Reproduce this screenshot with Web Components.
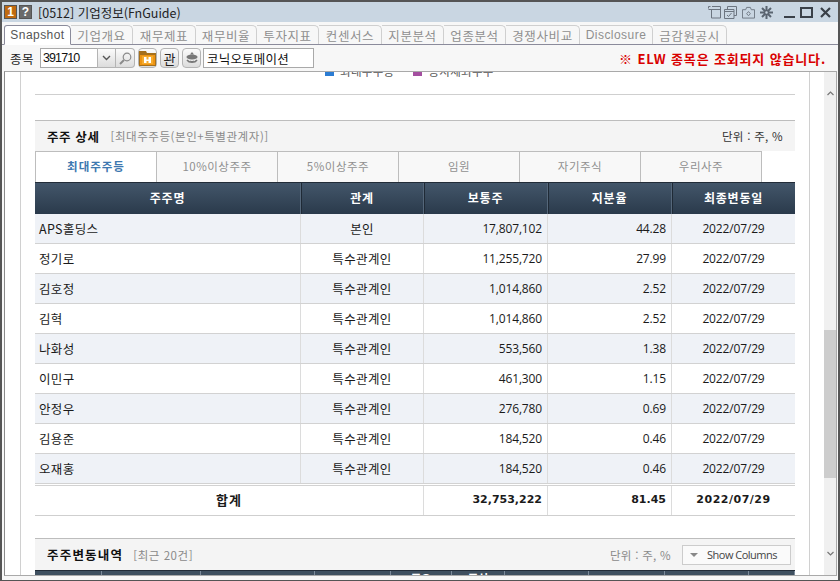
<!DOCTYPE html>
<html lang="ko">
<head>
<meta charset="utf-8">
<title>기업정보</title>
<style>
  html, body { margin: 0; padding: 0; background: #f4f4f4; }
  body { font-family: "Noto Sans CJK KR", "Open Sans", sans-serif; font-size: 12px; }
</style>
</head>
<body>
<fn-window></fn-window>

<script>
const KR = `"Noto Sans CJK KR", sans-serif`;
const NUM = `"Open Sans", "Noto Sans CJK KR", sans-serif`;

class FnTitleBar extends HTMLElement {
  constructor() {
    super();
    this.attachShadow({ mode: "open" }).innerHTML = `
      <style>
        :host { display: flex; align-items: center; height: 20px; background: #c9d6e2; padding: 0 0 0 2px; color: #222; }
        .badge { width: 11px; height: 12px; display: flex; align-items: center; justify-content: center; font: bold 12px "Liberation Sans", sans-serif; color: #fff; margin-right: 2px; border: 1px solid #555; }
        .one { background: #c06a10; }
        .help { background: #6a6a6a; }
        .title { margin-left: 4px; font: 12.500px ${KR}; white-space: nowrap; flex: 1; }
        svg { display: block; fill: none; stroke: #6c7580; stroke-width: 1; }
        .tools { display: flex; align-items: center; }
        .win { display: flex; align-items: center; margin-left: 11px; margin-right: 7px; }
        .win svg { stroke: #3a4048; stroke-width: 2; }
      </style>
      <span class="badge one">1</span><span class="badge help">?</span>
      <span class="title">[0512] 기업정보(FnGuide)</span>
      <span class="tools">
        <svg style="margin-right:3px" width="13" height="13" viewBox="0 0 13 13"><path d="M.5 .5h2M.5 .5v2M4 .5h8.500v11.500h-9v-8M.5 3.500h12"/></svg>
        <svg style="margin-right:5px" width="13" height="13" viewBox="0 0 13 13"><path d="M3.500 3V.5h9v9H10M.5 3.500h9.500v9H.5zM.5 5.500h9.500M3 9l1.500 1.500L7.500 7"/></svg>
        <svg style="margin-right:5px" width="13" height="13" viewBox="0 0 14 13"><path d="M.5 3.500h3.500l1-2.500h4l1 2.500h3.500v9H.5zM7 5.500L9 7.800 7 10 5 7.800z"/></svg>
        <svg width="13" height="13" viewBox="0 0 13 13" style="stroke:#5a6470;stroke-width:2"><path d="M6.500 0v13M0 6.500h13M2 2l9 9M11 2l-9 9"/><circle cx="6.500" cy="6.500" r="2" fill="#c9d6e2" stroke-width="1.500"/></svg>
      </span>
      <span class="win">
        <svg style="margin-right:5px" width="11" height="13" viewBox="0 0 11 13"><path d="M0 11h11"/></svg>
        <svg style="margin-right:7px" width="13" height="11" viewBox="0 0 13 11"><path d="M1 1h11v9H1z"/></svg>
        <svg width="11" height="11" viewBox="0 0 11 11" style="stroke-width:2.200"><path d="M1 1l9 9M10 1l-9 9"/></svg>
      </span>`;
  }
}

class FnTabStrip extends HTMLElement {
  constructor() {
    super();
    const tabs = [["Snapshot", 67], ["기업개요", 62], ["재무제표", 63], ["재무비율", 61], ["투자지표", 62], ["컨센서스", 63], ["지분분석", 62], ["업종분석", 62], ["경쟁사비교", 74], ["Disclosure", 73], ["금감원공시", 74]];
    this.attachShadow({ mode: "open" }).innerHTML = `
      <style>
        :host { display: flex; align-items: flex-end; height: 22px; padding-left: 2px; border-bottom: 1px solid #8b8b9b; background: #f7f7f7; box-sizing: content-box; }
        .tab { box-sizing: border-box; height: 19px; border: 1px solid #cfcfcf; border-bottom: 0; border-left: 0; border-top-right-radius: 5px; color: #8f8f8f; font: 12.500px/19px ${KR}; letter-spacing: .6px; text-align: center; white-space: nowrap; }
        .tab.on { background: #fff; color: #555; border: 1px solid #8b8b9b; border-bottom: 1px solid #fff; margin-bottom: -1px; height: 20px; border-top-left-radius: 3px; border-top-right-radius: 5px; }
        .latin { font-family: "Liberation Sans", sans-serif; font-size: 12px; letter-spacing: .45px; }
      </style>
      ${tabs.map(([t, w], i) => `<div class="tab ${i === 0 ? "on" : ""} ${/^[A-Z]/.test(t) ? "latin" : ""}" style="width:${w}px">${t}</div>`).join("")}`;
  }
}

class FnToolBar extends HTMLElement {
  constructor() {
    super();
    this.attachShadow({ mode: "open" }).innerHTML = `
      <style>
        :host { display: flex; align-items: center; height: 26px; padding: 0 12px 0 8px; background: #f7f7f7; color: #222; }
        .label { width: 30px; font: 12.500px ${KR}; letter-spacing: .5px; }
        .field { box-sizing: border-box; height: 20px; border: 1px solid #a9a9a9; background: #fff; font: 12.500px ${KR}; color: #111; display: flex; align-items: center; padding-left: 3px; }
        .code { width: 57px; padding-left: 2px; font-family: "Liberation Sans", sans-serif; font-size: 12.500px; letter-spacing: -.9px; border-right: 0; }
        .seg { box-sizing: border-box; width: 19px; height: 20px; border: 1px solid #b4b4b4; background: linear-gradient(#fbfbfb, #dcdcdc); display: flex; align-items: center; justify-content: center; }
        .seg.btn { border-radius: 4px; margin-left: 3px; font: 13px ${KR}; color: #222; }
        .seg + .seg:not(.btn) { border-left: 0; border-radius: 0 4px 4px 0; }
        .name { width: 111px; margin-left: 2px; padding-left: 3px; letter-spacing: .2px; }
        .msg { margin-left: auto; color: #d90000; font: bold 13px ${KR}; letter-spacing: .85px; white-space: nowrap; }
        svg { display: block; }
      </style>
      <span class="label">종목</span>
      <span class="field code">391710</span>
      <span class="seg"><svg width="9" height="6" viewBox="0 0 9 6"><path d="M1 1l3.500 3.500L8 1" fill="none" stroke="#555" stroke-width="1.400"/></svg></span>
      <span class="seg"><svg width="13" height="13" viewBox="0 0 13 13" fill="none" stroke="#8a8a8a"><circle cx="8" cy="5" r="3.800" stroke-width="1.200"/><path d="M5 8l-4 4" stroke-width="2"/></svg></span>
      <span class="seg btn"><svg width="17" height="15" viewBox="0 0 17 15"><path d="M0 0h7l1 2h9v13H0z" fill="#a5701c"/><path d="M1 4h15v10H1z" fill="#ee9412"/><path d="M3 5h11v8H3z" fill="#f5ab2e"/><path d="M5 6h2.500v2.500h2V6H12v6H9.500V10h-2v2H5z" fill="#fff"/></svg></span>
      <span class="seg btn">관</span>
      <span class="seg btn"><svg width="14" height="14" viewBox="0 0 14 14"><path d="M5 3.500L7 1l2 2.500z" fill="#777"/><ellipse cx="7" cy="6" rx="5.500" ry="2.500" fill="#777"/><path d="M2 9c2 3 8 3 10 0" fill="none" stroke="#777" stroke-width="1.500"/><path d="M5 10c1 .8 3 .8 4 0" fill="none" stroke="#777" stroke-width="1"/></svg></span>
      <span class="field name">코닉오토메이션</span>
      <span class="msg">※ ELW 종목은 조회되지 않습니다.</span>`;
  }
}

class FnSectionHead extends HTMLElement {
  constructor() {
    super();
    this.attachShadow({ mode: "open" }).innerHTML = `
      <style>
        :host { display: flex; align-items: center; box-sizing: border-box; height: 31px; border-top: 1px solid #bdbdbd; background: #f4f4f4; padding: 0 12px; }
        .title { font: bold 12.500px ${KR}; color: #111; letter-spacing: var(--title-gap, .6px); }
        .sub { margin-left: var(--sub-gap, 11px); color: #8a8a8a; font: 11.500px ${KR}; letter-spacing: .55px; }
        .unit { margin-left: auto; color: var(--unit-color, #333); font: 11.500px ${KR}; letter-spacing: .3px; }
      </style>
      <span class="title"><slot name="title"></slot></span>
      <span class="sub"><slot name="sub"></slot></span>
      <span class="unit"><slot name="unit"></slot></span>
      <slot name="extra"></slot>`;
  }
}

class FnShowColumns extends HTMLElement {
  constructor() {
    super();
    this.attachShadow({ mode: "open" }).innerHTML = `
      <style>
        :host { display: flex; align-items: center; box-sizing: border-box; width: 109px; height: 20px; margin-left: 11px; margin-right: -8px; border: 1px solid #ccc; background: #fafafa; color: #444; font: 11px "Open Sans", sans-serif; letter-spacing: -.5px; white-space: nowrap; }
        i { flex: none; width: 0; height: 0; border: 4px solid transparent; border-top: 4px solid #888; border-bottom: 0; margin: 0 9px 0 7px; }
      </style>
      <i></i><span>Show Columns</span>`;
  }
}

class FnHolderTabs extends HTMLElement {
  constructor() {
    super();
    const tabs = ["최대주주등", "10%이상주주", "5%이상주주", "임원", "자기주식", "우리사주"];
    this.attachShadow({ mode: "open" }).innerHTML = `
      <style>
        :host { display: flex; height: 31px; background: #fff; }
        .t { box-sizing: border-box; width: 121px; height: 31px; border: 1px solid #bdbdbd; border-left: 0; border-bottom: 0; background: #f8f8f8; color: #909090; font: 11.500px/28px ${KR}; letter-spacing: .5px; text-align: center; }
        .t.on { border-left: 1px solid #bdbdbd; background: #fff; color: #3d78b0; font-weight: bold; width: 122px; letter-spacing: 1px; }
      </style>
      ${tabs.map((t, i) => `<div class="t ${i === 0 ? "on" : ""}">${t}</div>`).join("")}`;
  }
}

class FnHolderTable extends HTMLElement {
  constructor() {
    super();
    const rows = [
      ["APS홀딩스", "본인", "17,807,102", "44.28"],
      ["정기로", "특수관계인", "11,255,720", "27.99"],
      ["김호정", "특수관계인", "1,014,860", "2.52"],
      ["김혁", "특수관계인", "1,014,860", "2.52"],
      ["나화성", "특수관계인", "553,560", "1.38"],
      ["이민구", "특수관계인", "461,300", "1.15"],
      ["안정우", "특수관계인", "276,780", "0.69"],
      ["김용준", "특수관계인", "184,520", "0.46"],
      ["오재홍", "특수관계인", "184,520", "0.46"],
    ];
    const row = (r, i) => `
      <div class="row ${i % 2 ? "" : "alt"}">
        <div class="c l">${r[0]}</div><div class="c m">${r[1]}</div>
        <div class="c r n">${r[2]}</div><div class="c r n">${r[3]}</div><div class="c m n">2022/07/29</div>
      </div>`;
    this.attachShadow({ mode: "open" }).innerHTML = `
      <style>
        :host { display: block; --cols: 265px 123px 124px 124px 124px; }
        .head, .row, .total { display: grid; grid-template-columns: var(--cols); }
        .head { height: 32px; background: linear-gradient(#43566a, #2a3a4b); border-top: 1px solid #222c38; box-sizing: border-box; }
        .head div { color: #fff; font: bold 12px/29px ${KR}; letter-spacing: .8px; text-align: center; border-left: 1px solid #55677a; box-shadow: inset 1px 0 0 #1f2a36; }
        .head div:first-child { border-left: 0; box-shadow: none; }
        .row { height: 30px; box-sizing: border-box; border-bottom: 1px solid #d2d2d2; background: #fff; }
        .row.alt { background: #eff2f7; }
        .c { border-left: 1px solid #dcdcdc; font: 12.500px/29px ${KR}; letter-spacing: .35px; color: #1a1a1a; white-space: nowrap; }
        .c:first-child { border-left: 0; }
        .l { padding-left: 4px; }
        .m { text-align: center; }
        .r { text-align: right; padding-right: 5px; }
        .n { font-family: ${NUM}; font-size: 12px; letter-spacing: -.15px; }
        .total { height: 31px; box-sizing: border-box; border-top: 1px solid #d2d2d2; border-bottom: 1px solid #cfcfcf; margin-top: 1px; background: #fff; }
        .total .c { font-weight: bold; line-height: 28px; }
        .total .n { font-family: "DejaVu Sans", sans-serif; font-size: 11px; letter-spacing: 0; }
        .total .m { letter-spacing: .5px; }
        .total .span { grid-column: 1 / 3; text-align: center; font-size: 13px; letter-spacing: 1px; }
      </style>
      <div class="head"><div>주주명</div><div>관계</div><div>보통주</div><div>지분율</div><div>최종변동일</div></div>
      ${rows.map(row).join("")}
      <div class="total">
        <div class="c span">합계</div>
        <div class="c r n">32,753,222</div><div class="c r n">81.45</div><div class="c m n">2022/07/29</div>
      </div>`;
  }
}

class FnScrollbar extends HTMLElement {
  constructor() {
    super();
    this.attachShadow({ mode: "open" }).innerHTML = `
      <style>
        :host { display: flex; flex-direction: column; width: 12px; background: #f0f0f0; align-items: stretch; }
        .arrow { height: 10px; display: flex; align-items: center; justify-content: center; }
        .thumb { height: 148px; background: #cdcdcd; }
        svg { display: block; }
      </style>
      <div style="height:16px"></div>
      <div class="arrow"><svg width="7" height="5" viewBox="0 0 7 5"><path d="M.5 4L3.500 1l3 3" fill="none" stroke="#777" stroke-width="1.200"/></svg></div>
      <div style="height:232px"></div>
      <div class="thumb"></div>
      <div style="height:70px"></div>
      <div class="arrow"><svg width="7" height="5" viewBox="0 0 7 5"><path d="M.5 1L3.500 4l3-3" fill="none" stroke="#777" stroke-width="1.200"/></svg></div>
      <div style="flex:1"></div>`;
  }
}

class FnPage extends HTMLElement {
  constructor() {
    super();
    this.attachShadow({ mode: "open" }).innerHTML = `
      <style>
        :host { display: flex; box-sizing: border-box; flex: 1; min-height: 0; margin: 0 1px 0 2px; border: 1px solid #a9a9a9; border-left-color: #8a8a8a; background: #fff; overflow: hidden; }
        .sheet { box-sizing: border-box; width: 790px; margin-left: 15px; border-left: 1px solid #d0d0d0; border-right: 1px solid #d0d0d0; padding: 0 13px 0 14px; overflow: hidden; }
        .legend { height: 22px; border-bottom: 1px solid #cfcfcf; overflow: hidden; }
        .legend div { display: flex; margin: -8px 0 0 290px; height: 14px; font: 11.500px/14px ${KR}; letter-spacing: .3px; color: #555; align-items: center; }
        .legend i { width: 9px; height: 5px; margin: 4px 6px 0 0; background: #2b7cd3; }
        .legend i.b { background: #a44fa0; margin-left: 19px; }
        .content { width: 760px; }
        fn-section-head.first { margin-top: 25px; }
        fn-section-head.second { margin-top: 22px; height: 32px; --unit-color: #8a8a8a; --title-gap: 1.2px; --sub-gap: 10px; }
        .stub { height: 6px; overflow: hidden; background: #3f5060; display: grid; grid-template-columns: 67px 99px 114px 76px 61px 53px 84px 76px 84px 46px; border-top: 1px solid #222c38; box-sizing: border-box; }
        .stub b { border-right: 1px solid #7b8a9a; color: #fff; font: bold 11px/14px ${KR}; text-align: center; }
        .gutter { flex: 1; }
      </style>
      <div class="sheet">
        <div class="content">
          <div class="legend"><div><i></i>최대주주등<i class="b"></i>공시제외주주</div></div>
          <fn-section-head class="first">
            <span slot="title">주주 상세</span><span slot="sub">[최대주주등(본인+특별관계자)]</span><span slot="unit">단위 : 주, %</span>
          </fn-section-head>
          <fn-holder-tabs></fn-holder-tabs>
          <fn-holder-table></fn-holder-table>
          <fn-section-head class="second">
            <span slot="title">주주변동내역</span><span slot="sub">[최근 20건]</span><span slot="unit">단위 : 주, %</span>
            <fn-show-columns slot="extra"></fn-show-columns>
          </fn-section-head>
          <div class="stub"><b></b><b></b><b></b><b></b><b>주요</b><b>주식</b><b></b><b></b><b></b><b></b></div>
        </div>
      </div>
      <div class="gutter"></div>
      <fn-scrollbar></fn-scrollbar>`;
  }
}

class FnWindow extends HTMLElement {
  constructor() {
    super();
    this.attachShadow({ mode: "open" }).innerHTML = `
      <style>
        :host { display: flex; flex-direction: column; box-sizing: border-box; width: 840px; height: 581px; border: 1px solid #555; border-width: 2px 2px 1px 2px; background: #f7f7f7; padding-bottom: 4px; }
      </style>
      <fn-title-bar></fn-title-bar>
      <fn-tab-strip></fn-tab-strip>
      <fn-tool-bar></fn-tool-bar>
      <fn-page></fn-page>`;
  }
}

customElements.define("fn-title-bar", FnTitleBar);
customElements.define("fn-tab-strip", FnTabStrip);
customElements.define("fn-tool-bar", FnToolBar);
customElements.define("fn-section-head", FnSectionHead);
customElements.define("fn-show-columns", FnShowColumns);
customElements.define("fn-holder-tabs", FnHolderTabs);
customElements.define("fn-holder-table", FnHolderTable);
customElements.define("fn-scrollbar", FnScrollbar);
customElements.define("fn-page", FnPage);
customElements.define("fn-window", FnWindow);
</script>
</body>
</html>
